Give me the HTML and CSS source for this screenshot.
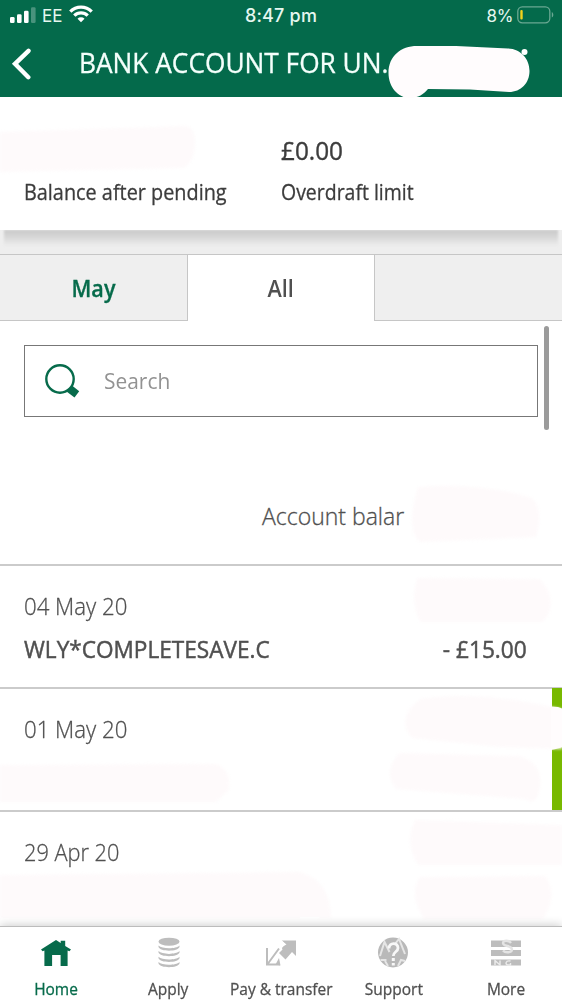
FILE: index.html
```
<!DOCTYPE html>
<html lang="en">
<head>
<meta charset="utf-8">
<title>Bank account</title>
<link rel="stylesheet" href="styles.css">
</head>
<body>
<div class="app">
  <header class="header">
    <div class="status">
      <div class="status-left">
        <svg class="signal" width="26" height="16" viewBox="0 0 26 16" fill="#fff">
          <rect x="0" y="10" width="4.6" height="6" rx="1.3"/>
          <rect x="7" y="7.3" width="4.6" height="8.7" rx="1.3"/>
          <rect x="14" y="3.7" width="4.6" height="12.3" rx="1.3"/>
          <rect x="21" y="0.3" width="4.6" height="15.7" rx="1.3" opacity=".28"/>
        </svg>
        <span class="carrier">EE</span>
        <svg class="wifi" width="24" height="18" viewBox="0 0 24 18" fill="none" stroke="#fff" stroke-width="3.3">
          <path d="M1.3 6.6a15.2 15.2 0 0 1 21.4 0"/>
          <path d="M5.3 10.7a9.5 9.5 0 0 1 13.4 0"/>
          <path d="M12 17.2 8.5 13.8a5 5 0 0 1 7 0z" fill="#fff" stroke="none"/>
        </svg>
      </div>
      <div class="clock">8:47 pm</div>
      <div class="status-right">
        <span>8%</span>
        <svg width="38" height="18" viewBox="0 0 38 18">
          <rect x=".8" y=".8" width="32" height="16" rx="4.5" fill="none" stroke="#6aa893" stroke-width="1.3"/>
          <rect x="3.3" y="4" width="2.4" height="9.6" rx="1" fill="#f2d21c"/>
          <path d="M34.800 6v5.600c2-1 2-4.600 0-5.600z" fill="#6aa893"/>
        </svg>
      </div>
    </div>
    <div class="titlebar">
      <svg class="back" width="22" height="32" viewBox="0 0 22 32" fill="none" stroke="#fff" stroke-width="4.400" stroke-linecap="round"><path d="M17.500 2.800 4 15.800 17.300 29.200"/></svg>
      <h1 class="title">BANK ACCOUNT FOR UN.</h1>
    </div>
  </header>

  <section class="summary">
    <div class="summary-col"><div class="amount"></div><div class="label">Balance after pending</div></div>
    <div class="summary-col"><div class="amount">£0.00</div><div class="label label-limit">Overdraft limit</div></div>
  </section>

  <div class="band"><div class="band-shadow"></div></div>

  <nav class="tabs">
    <div class="tab tab-month"><span>May</span></div>
    <div class="tab tab-active"><span>All</span></div>
    <div class="tab"></div>
  </nav>

  <main class="content">
    <div class="search">
      <svg width="36" height="36" viewBox="0 0 36 36">
        <circle cx="16" cy="16" r="13.700" fill="none" stroke="#076b4b" stroke-width="2.400"/>
        <path d="M22.500 28.500 28 22.500l7.200 5.700-4.700 6.300z" fill="#076b4b"/>
      </svg>
      <span class="search-text">Search</span>
    </div>
    <div class="balance-head">Account balar</div>
    <article class="row">
      <div class="date">04 May 20</div>
      <div class="entry"><span class="payee">WLY*COMPLETESAVE.C</span><span class="sum">- £15.00</span></div>
    </article>
    <article class="row"><div class="date">01 May 20</div><div class="marker"></div></article>
    <article class="row"><div class="date date-apr">29 Apr 20</div></article>
    <div class="scrollbar"></div>
  </main>

  <footer class="bottom">
    <div class="item item-active">
      <svg width="32" height="32" viewBox="0 0 32 32" fill="#076b4b"><path d="M1 13.600 16 4l4.700 3V4.700h4.500v5.200L31 13.600l-1.600 1.700-1.800-.8V30h-7V19h-8.500v11H4.400V14.500l-1.800.8z"/></svg>
      <span>Home</span>
    </div>
    <div class="item">
      <svg width="32" height="32" viewBox="0 0 32 32" fill="#bdbdbd">
        <ellipse cx="16" cy="5.700" rx="10.500" ry="4"/>
        <path id="coin" d="M5.500 9.500c3.500 3.700 17.500 3.700 21 0v1.500c-1.500 4.900-19.500 4.900-21 0z"/>
        <use href="#coin" y="5.600"/><use href="#coin" y="11.200"/><use href="#coin" y="16.500"/>
      </svg>
      <span>Apply</span>
    </div>
    <div class="item">
      <svg width="32" height="32" viewBox="0 0 32 32" fill="#bdbdbd">
        <path d="M2 12v16.500h13M3 27.500 14 12.500" fill="none" stroke="#bdbdbd" stroke-width="2"/>
        <path d="M10.500 28.500 14 22l1.500 7.500z"/>
        <path d="M16 4.500h15V20l-4-4-6.500 7.500-6.500-6.500 3.500-3.500-1-2.500 5-2.500z"/>
        <path d="m15.500 4 4 4-4.500 5" fill="none" stroke="#fff" stroke-width="1.500"/>
      </svg>
      <span>Pay &amp; transfer</span>
    </div>
    <div class="item">
      <svg width="32" height="32" viewBox="0 0 32 32">
        <circle cx="16" cy="16.500" r="15" fill="#b9b9b9"/>
        <g fill="none" stroke="#e6e6e6" stroke-width="2">
          <path d="M3 20 7.500 6l5 10M18 8l4-5 6 15M3.500 24h6M21 30l3-6 4 1M11 30l-3-5"/>
        </g>
        <path d="M12 12.500c0-6.500 9-6.500 9-.5 0 4-4.700 3.500-4.700 8" fill="none" stroke="#f8f8f8" stroke-width="2.800"/>
        <path d="M14.800 22h3v3h-3zM14.800 27h3v2.500h-3z" fill="#f8f8f8"/>
      </svg>
      <span>Support</span>
    </div>
    <div class="item">
      <svg width="32" height="32" viewBox="0 0 32 32">
        <path d="M1 4.500h30V11H1zM1 14h30v6H1zM1 23.500h30v6H1z" fill="#bdbdbd"/>
        <path d="M21 7c-2-3-8-3-8 0 0 4 9 2 9 6.500 0 3.500-7 3.500-9 1" fill="none" stroke="#e4e4e4" stroke-width="2.400"/>
        <path d="M5 29v-4.500l5 4.500v-4.500M20.500 25c-5-1-6 4-2 4h2v-2" fill="none" stroke="#ececec" stroke-width="1.400"/>
      </svg>
      <span>More</span>
    </div>
  </footer>

  <!-- hand-drawn redaction strokes lying over the page -->
  <svg class="redactions" width="562" height="1000" viewBox="0 0 562 1000" fill="#fefafb">
    <path d="M388.500 73C388.500 56 401 46 417 46H456L508 48.500C521 49 529.500 59 529.500 71S521 92 509 92L470 89.500 428 89C424 94 418 98 410 98 398 98 388.500 87 388.500 73Z" fill="#fffcfd"/>
    <circle cx="524.500" cy="52" r="3" fill="#fff"/>
    <g class="soft">
      <path d="M0 132 185 126Q196 127 195 145T183 168L0 172z"/>
      <path d="M418 487Q480 482 532 498 544 510 536 537L420 542Q405 530 418 487z"/>
      <path d="M417 578 540 579Q560 602 543 622L420 622Q410 600 417 578z"/>
      <path d="M420 699Q475 690 551 707L562 709V749L500 747 412 738Q395 718 420 699z"/>
      <path d="M400 753 520 756Q543 764 540 786T525 799L396 789Q382 770 400 753z"/>
      <path d="M0 765 215 764Q231 768 229 790L216 802H0z"/>
      <path d="M415 820 562 825V865L418 865Q404 842 415 820z"/>
      <path d="M0 875 300 872Q330 880 331 918H0z"/>
      <path d="M420 877 545 876Q559 895 543 919H424Q408 895 420 877z"/>
    </g>
    <path d="M562 708.500 558 707 551 706.500V750l4-.8 7-2z" fill="#fffcfd"/>
    <path d="M300 917h20q-6 6-13 5.500T300 917z" fill="#fff"/>
  </svg>
</div>
</body>
</html>
```
FILE: styles.css
```
* { box-sizing: border-box; }
body { margin: 0; background: #fff; font-family: "Open Sans", "Noto Sans", sans-serif; }
.app { position: relative; width: 562px; height: 1000px; overflow: hidden; display: flex; flex-direction: column; white-space: nowrap; }

/* condensed lettering: each label is drawn slightly narrower than its font */
.title, .amount, .label, .search-text, .balance-head, .date, .payee { transform-origin: 0 50%; }

.header { height: 97px; background: #046a4b; color: #f4fffb; }
.status { height: 32px; display: grid; grid-template-columns: 1fr auto 1fr; align-items: center; padding: 0 7px 0 10px; font: 400 17.5px/32px Inter, sans-serif; color: #e6f7f0; }
.status-left { display: flex; align-items: center; }
.signal { margin-top: -2px; }
.carrier { margin-left: 6px; font-size: 17px; }
.wifi { margin: -4px 0 0 7px; }
.clock { font-weight: 500; font-size: 18px; letter-spacing: .2px; transform: translateX(-1.500px); }
.status-right { display: flex; align-items: center; justify-content: flex-end; gap: 4px; font-size: 17px; letter-spacing: -.4px; }
.status-right svg { margin-top: -2px; }
.titlebar { height: 65px; display: flex; align-items: center; padding: 0 0 5px 11px; }
.back { margin-top: 4px; }
.title { margin: 0 0 0 46px; font-size: 28px; line-height: 40px; font-weight: 400; -webkit-text-stroke: .3px; transform: scaleX(.938); }

.summary { height: 133px; display: grid; grid-template-columns: 257px 1fr; padding: 38px 0 0 24px; color: #3c3c3c; }
.summary-col { display: flex; flex-direction: column; gap: 12px; }
.amount { height: 30px; font-size: 26px; line-height: 30px; -webkit-text-stroke: .4px; transform: scaleX(.935); }
.label { font-size: 21.5px; line-height: 30px; -webkit-text-stroke: .3px; transform: scaleX(.923); }
.label-limit { transform: scaleX(.905); }

.band { height: 24px; background: #eee; overflow: hidden; }
.band-shadow { height: 16px; margin: 0 4px; background: linear-gradient(#c9c9c9, #d8d8d8 45%, #eee); filter: blur(1px); }

.tabs { height: 67px; display: grid; grid-template-columns: 188px 186px 1fr; }
.tab { background: #efefef; border-top: 1px solid #c6c6c6; border-bottom: 1px solid #c6c6c6; font-size: 24px; font-weight: 600; line-height: 65px; text-align: center; }
.tab span { display: inline-block; transform: scaleX(.9); }
.tab-month { color: #076b4b; border-right: 1px solid #c6c6c6; }
.tab-month span { -webkit-text-stroke: .3px; }
.tab-active { background: #fff; color: #505050; border-bottom-color: #fff; }
.tab:last-child { border-left: 1px solid #c6c6c6; }

.content { position: relative; height: 605px; overflow: hidden; }
.search { height: 72px; margin: 24px 24px 0; border: 1.5px solid #777; display: flex; align-items: center; padding-left: 19px; }
.search-text { margin-left: 24px; color: #929292; font-size: 22.5px; line-height: 30px; transform: scaleX(.93); }
.balance-head { height: 147px; padding: 84px 0 0 262px; font-size: 23px; line-height: 30px; font-weight: 300; color: #505050; -webkit-text-stroke: .3px; }
.row { position: relative; height: 123px; border-top: 2px solid #cbcbcb; padding: 25px 35px 0 24px; color: #505050; }
.date { font-size: 24px; line-height: 30px; font-weight: 300; -webkit-text-stroke: .3px; transform: scaleX(.925); }
.date-apr { transform: scaleX(.905); }
.entry { display: flex; justify-content: space-between; margin-top: 13px; font-size: 24.5px; line-height: 30px; -webkit-text-stroke: .5px; }
.payee { transform: scaleX(.922); }
.sum { transform: scaleX(.925); transform-origin: 100% 50%; }
.marker { position: absolute; right: 0; top: -1px; width: 10.5px; height: 123px; background: #78b900; }
.scrollbar { position: absolute; left: 544px; top: 5px; width: 4.5px; height: 104px; border-radius: 3px; background: #9b9b9b; }

.bottom { position: relative; z-index: 2; height: 74px; background: #fff; border-top: 1.5px solid #bcbcbc; box-shadow: 0 -1px 9px rgba(0,0,0,.2); display: grid; grid-template-columns: repeat(5, 1fr); color: #505050; }
.item { display: flex; flex-direction: column; align-items: center; padding-top: 9px; font-size: 17px; line-height: 24px; -webkit-text-stroke: .3px; }
.item span { margin-top: 9px; transform: scaleX(.91); }
.item-active { color: #076b4b; }

.redactions { position: absolute; left: 0; top: 0; z-index: 1; }
.soft { filter: blur(1.5px); }
```
